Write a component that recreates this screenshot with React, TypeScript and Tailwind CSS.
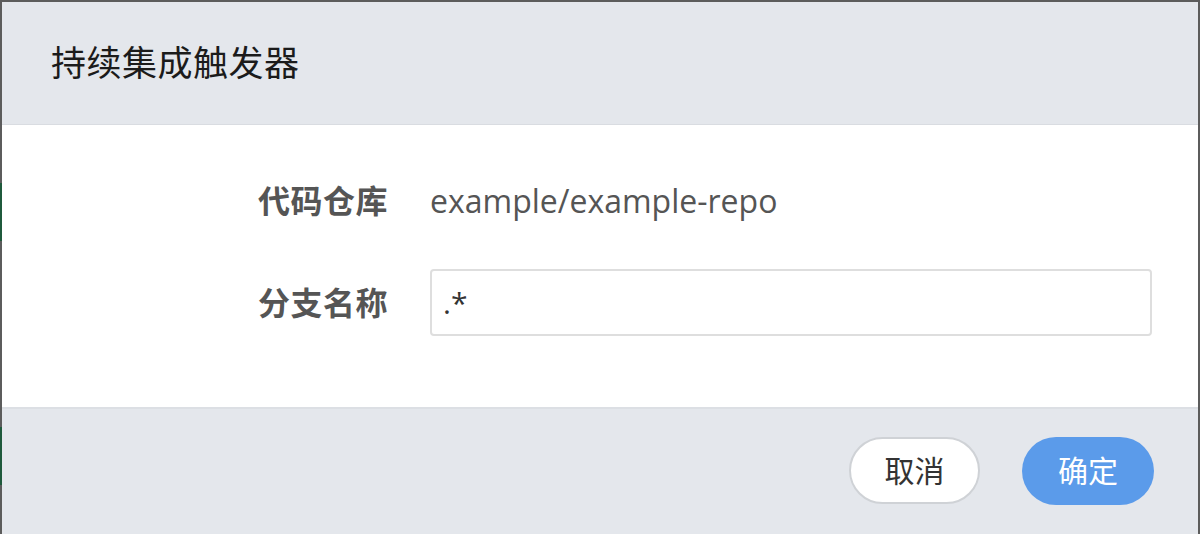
import React from "react";

export default function App() {
  const sans = { fontFamily: '"Open Sans", "Noto Sans CJK SC", sans-serif' };
  return (
    <div className="w-[1200px] h-[534px] bg-[#5c5c5c] flex overflow-hidden" style={sans}>
      <div className="w-[2px] h-full flex flex-col">
        <div className="h-[183px] bg-[#5c5c5c]" />
        <div className="h-[58px] bg-[#1f5a3c]" />
        <div className="h-[186px] bg-[#5c5c5c]" />
        <div className="h-[58px] bg-[#1f5a3c]" />
        <div className="flex-1 bg-[#5c5c5c]" />
      </div>
      <div className="flex-1 mt-[2px] mr-[2px] flex flex-col bg-white">
        <div className="h-[123px] bg-[#e4e7ec] border-b border-[#d9dce1] flex items-center pl-[49px]">
          <h1 className="text-[35px] text-[#1b1b1b] font-normal tracking-[0.5px]">持续集成触发器</h1>
        </div>
        <div className="h-[282px] bg-white flex flex-col pt-[53px] pl-[256px] pr-[46px]">
          <div className="flex items-center h-[46px]">
            <div className="w-[172px] text-[32px] font-semibold text-[#555] tracking-[0.5px]">代码仓库</div>
            <div className="text-[32px] text-[#555]">example/example-repo</div>
          </div>
          <div className="flex items-center mt-[45px]">
            <div className="w-[172px] text-[32px] font-semibold text-[#555] tracking-[0.5px]">分支名称</div>
            <div className="flex-1 h-[67px] border-2 border-[#dedede] rounded-[4px] flex items-center px-[11px] text-[30px] text-[#333]">
              .*
            </div>
          </div>
        </div>
        <div className="flex-1 bg-[#e4e7ec] border-t-2 border-[#dcdfe4] flex items-center justify-end gap-[42px] pr-[44px] pb-[2px]">
          <button className="w-[131px] h-[67px] rounded-full bg-white border-2 border-[#cfd2d6] text-[30px] text-[#333]">
            取消
          </button>
          <button className="w-[132px] h-[68px] rounded-full bg-[#5b9bea] text-[30px] text-white">
            确定
          </button>
        </div>
      </div>
    </div>
  );
}
